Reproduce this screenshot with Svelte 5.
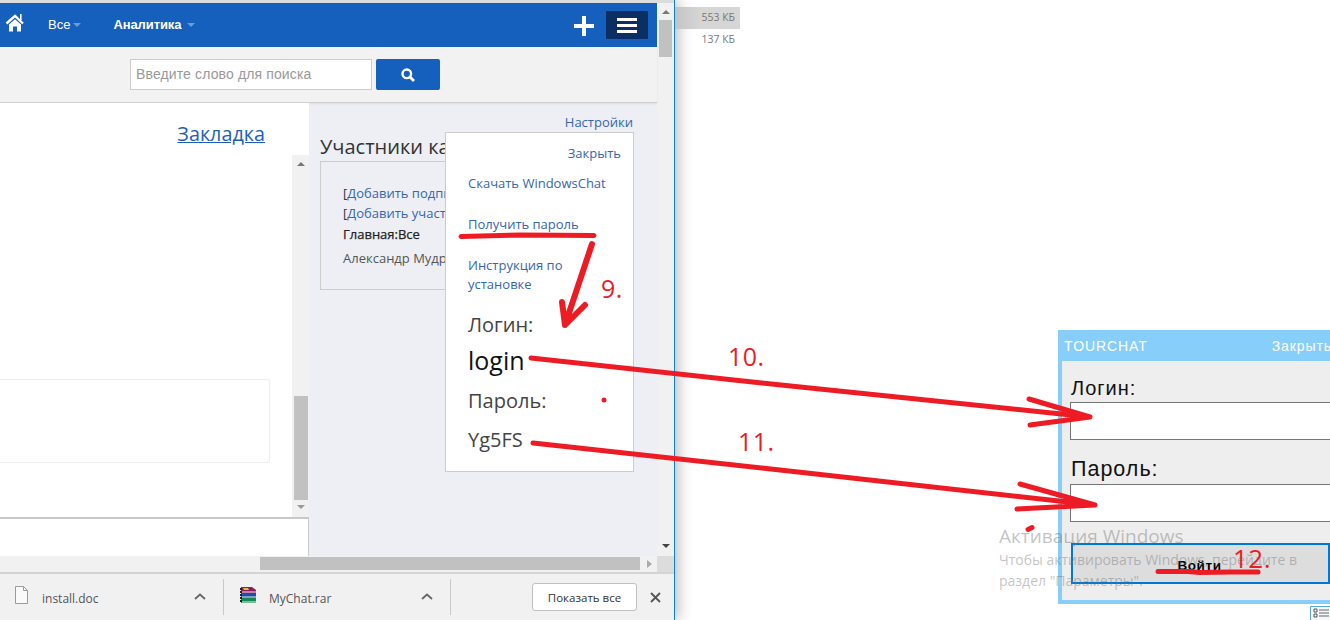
<script>
  const popupLinks = [
    { text: 'Скачать WindowsChat', cls: 'download' },
    { text: 'Получить пароль', cls: 'password' }
  ];
  const downloads = [
    { name: 'install.doc', kind: 'doc' },
    { name: 'MyChat.rar', kind: 'rar' }
  ];
</script>

<div class="desktop">
  <section class="browser">
    <div class="strip"></div>
    <div class="viewport">
      <div class="page">
        <header class="nav">
          <svg class="home" viewBox="0 0 20 18" width="20" height="18" aria-hidden="true">
            <path d="M1.500 9.500 10 1.800l8 7.700" fill="none" stroke="#fff" stroke-width="2.400" />
            <path d="M15 0h1.600v6H15z" fill="#fff" />
            <path d="M4 10.500 10 5.300l6 5.200v7h-4v-5H8v5H4z" fill="#fff" />
          </svg>
          <span class="menu all">Все</span><i class="caret"></i>
          <span class="menu analytics">Аналитика</span><i class="caret"></i>
          <span class="spacer"></span>
          <svg class="plus" viewBox="0 0 20 20" width="20" height="20" aria-hidden="true">
            <path d="M8 0h4v8h8v4h-8v8H8v-8H0V8h8z" fill="#fff" />
          </svg>
          <button class="burger" aria-label="Меню"><b></b><b></b><b></b></button>
        </header>
        <div class="searchbar">
          <div class="field">Введите слово для поиска</div>
          <button class="go" aria-label="Поиск">
            <svg viewBox="0 0 14 14" width="14" height="14" aria-hidden="true">
              <circle cx="5.800" cy="5.800" r="4.300" fill="none" stroke="#fff" stroke-width="2.400" />
              <path d="m9 9 4 4" stroke="#fff" stroke-width="2.800" />
            </svg>
          </button>
        </div>
        <main class="main">
          <div class="left">
            <div class="tabrow"><a href="#top">Закладка</a></div>
            <div class="feed">
              <div class="feedbody"><div class="post"></div></div>
              <div class="innerscroll">
                <i class="tri up"></i>
                <div class="track"><div class="thumb"></div></div>
                <i class="tri down"></i>
              </div>
            </div>
            <div class="composer"></div>
          </div>
          <aside class="side">
            <div class="settings">Настройки</div>
            <h2>Участники канала</h2>
            <div class="members">
              <div class="row">[<span class="lnk">Добавить подписчика</span></div>
              <div class="row">[<span class="lnk">Добавить участника</span></div>
              <div class="row strong">Главная:Все</div>
              <div class="row muted">Александр Мудров</div>
            </div>
            <div class="popup">
              <div class="close">Закрыть</div>
              {#each popupLinks as l}
                <div class="plink {l.cls}">{l.text}</div>
              {/each}
              <div class="plink guide">Инструкция по<br />установке</div>
              <div class="cred label first">Логин:</div>
              <div class="cred value-big">login</div>
              <div class="cred label second">Пароль:</div>
              <div class="cred value">Yg5FS</div>
            </div>
          </aside>
        </main>
      </div>
      <div class="vscroll">
        <i class="tri up"></i>
        <div class="vthumb"></div>
        <span class="spacer"></span>
        <i class="tri down dark"></i>
      </div>
    </div>
    <div class="hscroll">
      <i class="tri left-a"></i>
      <div class="hthumb"></div>
      <i class="tri right-a"></i>
      <div class="corner"></div>
    </div>
    <footer class="downloads">
      {#each downloads as d}
        <div class="dl {d.kind}">
          {#if d.kind === 'doc'}
            <svg class="fileicon" viewBox="0 0 13 18" width="13" height="18" aria-hidden="true">
              <path d="M.5.500h8l4 4v13H.5z" fill="#fafafa" stroke="#9a9a9a" />
              <path d="M8.500.500v4h4" fill="none" stroke="#9a9a9a" />
            </svg>
          {:else}
            <svg class="fileicon" viewBox="0 0 17 17" width="17" height="17" aria-hidden="true">
              <path d="M1 0h11l4 3v3H1z" fill="#8c1d5f" />
              <path d="M3 1h5l1 2H4z" fill="#d8c23a" />
              <path d="M1 6h15v5H1z" fill="#1b4fae" />
              <path d="M1 11h15v5H1z" fill="#128a52" />
              <path d="M2 5h14M2 10h14M2 15h14" stroke="#f1e9ee" />
              <path d="M1 1v15" stroke="#222" stroke-width="2" stroke-dasharray="2 1" />
            </svg>
          {/if}
          <span class="fname">{d.name}</span>
          <svg class="chev" viewBox="0 0 12 7" width="12" height="7" aria-hidden="true">
            <path d="m1 6 5-4.500L11 6" fill="none" stroke="#666" stroke-width="1.800" />
          </svg>
        </div>
      {/each}
      <span class="spacer"></span>
      <button class="showall">Показать все</button>
      <svg class="closex" viewBox="0 0 11 11" width="11" height="11" aria-hidden="true">
        <path d="m1 1 9 9M10 1l-9 9" stroke="#555" stroke-width="1.800" />
      </svg>
    </footer>
  </section>

  <div class="sizes">
    <div class="size active">553 КБ</div>
    <div class="size">137 КБ</div>
  </div>

  <section class="tourchat">
    <div class="tc-head"><span>TOURCHAT</span><span class="tc-close">Закрыть</span></div>
    <div class="tc-body">
      <label for="tc-login">Логин:</label>
      <input id="tc-login" type="text" />
      <label class="pw" for="tc-pass">Пароль:</label>
      <input id="tc-pass" type="text" />
      <button class="enter">Войти</button>
    </div>
  </section>

  <div class="activate">
    <div class="a-title">Активация Windows</div>
    <div class="a-line">Чтобы активировать Windows, перейдите в</div>
    <div class="a-line">раздел "Параметры".</div>
  </div>

  <svg class="ink" viewBox="0 0 1330 620" width="1330" height="620" aria-hidden="true">
    <g fill="none" stroke="#ed1c24" stroke-width="5" stroke-linecap="round" stroke-linejoin="round">
      <path d="M461 236.500 520 235l74 .5" />
      <path d="M592 244 565 325M562 302l3 23 20-20" stroke-width="6" />
      <path d="m531 358 250 27 309 32M1029 399l61 18-60 8" />
      <path d="m533 443 247 27 315 35M1020 484l75 21-78 4" />
      <path d="M1158 571.500h30l12 1 30-.5h28" />
      <path d="M1028 529.500 1032 527.500" />
    </g>
    <circle cx="604" cy="400" r="2.500" fill="#ed1c24" />
  </svg>
  <span class="num n9">9.</span>
  <span class="num n10">10.</span>
  <span class="num n11">11.</span>
  <span class="num n12">12.</span>

  <svg class="tray" viewBox="0 0 20 14" width="20" height="14" aria-hidden="true">
    <path d="M.5.500h20v14H.5z" fill="#f5f8fb" stroke="#5aa7dc" />
    <path d="M4 3h3v3H4zM4 8h3v3H4z" fill="none" stroke="#555" />
    <path d="M9 4h10M9 7h10M9 10h10" stroke="#666" />
  </svg>
</div>

<style>
  :global(body) { margin: 0; background: #fff; }
  * { box-sizing: border-box; }
  .desktop {
    position: relative;
    width: 1330px;
    height: 620px;
    overflow: hidden;
    background: #fff;
    font-family: "Open Sans", "Liberation Sans", sans-serif;
  }
  .spacer { flex: 1; }

  /* Browser window */
  .browser {
    position: absolute;
    left: 0;
    top: 0;
    width: 675px;
    height: 620px;
    display: flex;
    flex-direction: column;
    background: #edeff4;
    border-right: 1px solid #0f7fd6;
    box-shadow: 3px 0 14px rgba(0, 0, 0, 0.28);
  }
  .strip { height: 3px; background: #dcdcdc; }
  .viewport { display: flex; height: 553px; }
  .page { width: 657px; display: flex; flex-direction: column; }

  .nav {
    height: 44px;
    display: flex;
    align-items: center;
    background: #1560bd;
    color: #fff;
    font-family: "Liberation Sans", Arial, sans-serif;
    font-size: 13px;
  }
  .home { margin-left: 5px; margin-top: -5px; }
  .menu { margin-top: -2px; }
  .menu.all { margin-left: 23px; }
  .menu.analytics { margin-left: 32px; font-weight: 700; letter-spacing: -0.1px; }
  .caret {
    width: 0;
    height: 0;
    margin: 0 0 0 3px;
    border: 4px solid transparent;
    border-top-color: #6e9bd6;
    border-bottom: 0;
  }
  .analytics + .caret { margin-left: 6px; }
  .plus { margin-right: 12px; margin-top: 2px; }
  .burger {
    width: 42px;
    height: 28px;
    margin: 0 9px 0 0;
    padding: 0;
    border: 0;
    display: flex;
    flex-direction: column;
    align-items: center;
    justify-content: center;
    gap: 3px;
    background: #0c2f63;
  }
  .burger b { display: block; width: 20px; height: 3px; background: #fff; }

  .searchbar {
    height: 56px;
    padding: 12px 0 0 130px;
    display: flex;
    gap: 4px;
    align-items: flex-start;
    background: #f2f2f2;
    border-bottom: 1px solid #cfcfcf;
    box-shadow: 0 1px 2px rgba(0, 0, 0, 0.08);
    position: relative;
  }
  .field {
    width: 242px;
    height: 31px;
    padding-left: 5px;
    background: #fff;
    border: 1px solid #ccc;
    color: #999;
    font: 14px/29px "Liberation Sans", Arial, sans-serif;
    letter-spacing: 0.13px;
  }
  .go {
    width: 64px;
    height: 31px;
    padding: 3px 0 0;
    border: 0;
    border-radius: 2px;
    background: #1560bd;
  }

  .main { flex: 1; display: flex; min-height: 0; position: relative; }
  .left { width: 309px; display: flex; flex-direction: column; background: #fff; }
  .tabrow { height: 52px; padding: 18px 44px 0 0; text-align: right; font-size: 19.800px; line-height: 26px; }
  .tabrow a { color: #1c5fb4; }
  .feed { height: 362px; display: flex; }
  .feedbody { width: 292px; padding-top: 224px; }
  .post {
    width: 270px;
    height: 84px;
    border: 1px solid #eee;
    border-left: 0;
    border-radius: 0 3px 3px 0;
  }
  .innerscroll {
    width: 17px;
    display: flex;
    flex-direction: column;
    align-items: center;
    background: #f1f1f1;
  }
  .track { flex: 1; width: 100%; position: relative; }
  .thumb { position: absolute; left: 2px; right: 1px; top: 224px; height: 104px; background: #c1c1c1; }
  .composer { flex: 1; border-top: 2px solid #c8c8c8; border-right: 1px solid #ccc; }

  .tri { display: block; width: 0; height: 0; border: 4px solid transparent; flex: none; }
  .tri.up { margin: 7px 0 6px; border-top: 0; border-bottom: 4px solid #777; }
  .tri.down { margin: 4px 0 8px; border-bottom: 0; border-top: 4px solid #999; }
  .tri.dark { border-top-color: #444; margin: 0 0 8px; }

  .side { flex: 1; position: relative; padding: 10px 24px 0 11px; color: #333; }
  .settings { text-align: right; font-size: 13px; line-height: 18px; color: #3566b0; }
  .side h2 { margin: 2px 0 0; font-size: 20px; line-height: 28px; font-weight: 500; white-space: nowrap; color: #333; }
  .members {
    width: 290px;
    height: 129px;
    padding: 21px 0 0 22px;
    border: 1px solid #ccc;
    font-size: 13px;
    color: #333;
  }
  .row { height: 20px; line-height: 20px; white-space: nowrap; }
  .lnk { color: #3566b0; }
  .strong { color: #222; height: 24px; line-height: 22px; -webkit-text-stroke: 0.25px #222; }
  .muted { color: #555; height: 22px; line-height: 22px; }

  .popup {
    position: absolute;
    left: 136px;
    top: 29px;
    width: 189px;
    height: 340px;
    padding: 11px 12px 0 22px;
    background: #fff;
    border: 1px solid #ccc;
    font-size: 13px;
    line-height: 19px;
  }
  .close { text-align: right; color: #3566b0; }
  .plink { color: #3566b0; }
  .download { margin-top: 11px; }
  .password { margin-top: 22px; }
  .guide { margin-top: 22px; }
  .cred { white-space: nowrap; }
  .label { font-size: 20px; line-height: 28px; color: #444; }
  .label.first { margin-top: 17px; }
  .label.second { margin-top: 10px; }
  .value-big { margin-top: 4px; font-size: 25px; line-height: 34px; color: #111; }
  .value { margin-top: 11px; font-size: 20px; line-height: 28px; color: #444; }

  .vscroll {
    width: 17px;
    display: flex;
    flex-direction: column;
    align-items: center;
    background: #f1f1f1;
  }
  .vthumb { width: 13px; height: 37px; background: #c1c1c1; }

  .hscroll { height: 16px; display: flex; align-items: center; background: #f1f1f1; position: relative; }
  .hthumb { position: absolute; left: 260px; width: 380px; top: 1px; height: 13px; background: #c1c1c1; }
  .tri.left-a { position: absolute; left: -5px; top: 4px; border-right: 5px solid #444; border-left: 0; margin: 0; }
  .tri.right-a { position: absolute; left: 647px; top: 4px; border-left: 5px solid #aaa; border-right: 0; }
  .corner { position: absolute; left: 657px; top: 0; width: 17px; height: 16px; background: #dcdcdc; }

  .downloads {
    flex: 1;
    display: flex;
    align-items: center;
    background: #f1f1f1;
    border-top: 2px solid #d4d4d4;
    font-size: 12px;
    color: #555;
  }
  .dl {
    height: 36px;
    display: flex;
    align-items: center;
    border-right: 1px solid #c8c8c8;
    position: relative;
  }
  .dl.doc { width: 224px; padding-left: 15px; }
  .dl.rar { width: 227px; padding-left: 16px; }
  .dl .fileicon { margin-top: -4px; }
  .fname { margin-top: 3px; }
  .dl.doc .fname { margin-left: 14px; }
  .dl.rar .fname { margin-left: 12px; }
  .chev { position: absolute; right: 17px; top: 14px; }
  .showall {
    width: 105px;
    height: 28px;
    padding: 0;
    margin-right: 13px;
    background: #fff;
    border: 1px solid #c0c0c0;
    border-radius: 3px;
    font: 11.500px "Open Sans", sans-serif;
    color: #333;
  }
  .closex { margin-right: 13px; }

  /* Neighbouring file list */
  .sizes { position: absolute; left: 675px; top: 7px; width: 65px; font-size: 10.500px; color: #777; }
  .size { height: 22px; line-height: 20px; text-align: right; padding-right: 5px; }
  .size.active { background: linear-gradient(90deg, #c4c4c4, #d6d6d6 40%); }

  /* Tourchat login window */
  .tourchat {
    position: absolute;
    left: 1058px;
    top: 330px;
    width: 300px;
    height: 274px;
    display: flex;
    flex-direction: column;
    background: #87cefa;
    padding: 0 0 4px 4px;
    font-family: "Liberation Sans", Arial, sans-serif;
  }
  .tc-head {
    height: 31px;
    display: flex;
    padding: 0 0 0 2px;
    align-items: center;
    color: #fff;
    font-size: 14px;
    letter-spacing: 0.9px;
  }
  .tc-close { margin-left: 124px; }
  .tc-body { flex: 1; background: #eee; padding: 14px 0 0 8px; position: relative; }
  .tc-body label { display: block; margin-left: 1px; font-size: 20px; line-height: 27px; color: #111; letter-spacing: 1px; }
  .tc-body label.pw { margin: 16px 0 1px 1px; font-size: 21.500px; }
  .tc-body input {
    display: block;
    width: 290px;
    height: 38px;
    margin: 0;
    background: #fff;
    border: 1px solid #767676;
    border-radius: 0;
    padding: 0;
  }
  .enter {
    display: block;
    width: 259px;
    height: 41px;
    margin: 21px 0 0 1px;
    padding: 3px 2px 0 0;
    background: #ddd;
    border: 2px solid #0078d7;
    font: 700 13.500px "Liberation Sans", Arial, sans-serif;
    letter-spacing: 0.6px;
    color: #000;
  }

  .activate {
    position: absolute;
    left: 999px;
    top: 524px;
    color: rgba(110, 110, 110, 0.42);
    white-space: nowrap;
  }
  .a-title { font-size: 19px; line-height: 25px; }
  .a-line { font-size: 14px; line-height: 21px; }

  .ink { position: absolute; left: 0; top: 0; pointer-events: none; }
  .num { position: absolute; color: #ed1c24; font-size: 25px; line-height: 30px; letter-spacing: 0.5px; }
  .n9 { left: 601px; top: 273px; }
  .n10 { left: 728px; top: 341px; }
  .n11 { left: 738px; top: 426px; }
  .n12 { left: 1233px; top: 543px; font-size: 26px; }
  .tray { position: absolute; left: 1310px; top: 606px; }
</style>
